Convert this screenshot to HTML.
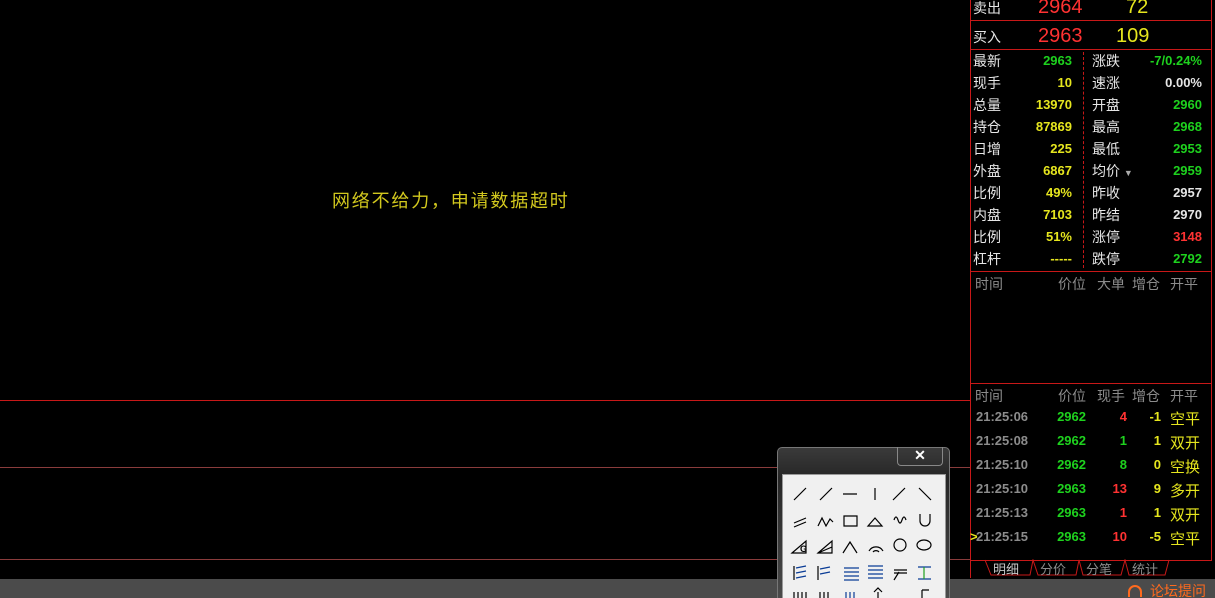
<!DOCTYPE html>
<html style="overflow:hidden;width:1215px;height:598px"><head><meta charset="utf-8"><style>
*{margin:0;padding:0;box-sizing:border-box}
body{width:1215px;height:598px;background:#000;position:relative;overflow:hidden;font-family:"Liberation Sans","Noto Sans CJK SC",sans-serif;}
.a{position:absolute;white-space:nowrap}
.hl{position:absolute;height:1px;background:#c81818}
.w{color:#e6e6e6;font-size:14px}
.n{font-size:13px;font-weight:bold;text-align:right}
.g{color:#1ed21e}.y{color:#e6e61e}.r{color:#ff3232}.wh{color:#e6e6e6}.gr{color:#8c8c8c}
.t{font-size:13px;font-weight:bold}
</style></head><body>
<div class="a" style="left:332px;top:187px;color:#d2c81e;font-size:18px;letter-spacing:1.8px">网络不给力，申请数据超时</div>
<div class="hl" style="left:0;top:400px;width:970px"></div>
<div class="hl" style="left:0;top:467px;width:970px;background:#8a3c3c"></div>
<div class="hl" style="left:0;top:559px;width:970px;background:#8a3c3c"></div>
<div class="a" style="left:0;top:579px;width:1215px;height:19px;background:#4b4b4b"></div>
<div class="a" style="left:970px;top:0;width:1px;height:578px;background:#c81818"></div>
<div class="a" style="left:1211px;top:0;width:1px;height:560px;background:#c81818"></div>
<div class="hl" style="left:970px;top:20px;width:242px"></div>
<div class="hl" style="left:970px;top:49px;width:242px"></div>
<div class="hl" style="left:970px;top:271px;width:242px"></div>
<div class="hl" style="left:970px;top:383px;width:242px"></div>
<div class="hl" style="left:970px;top:560px;width:242px"></div>
<div class="a" style="left:1083px;top:52px;height:216px;border-left:1px dashed #c81818"></div>
<div class="a w" style="left:973px;top:-2px">卖出</div>
<div class="a r" style="left:1038px;top:-4px;font-size:20px">2964</div>
<div class="a y" style="left:1126px;top:-4px;font-size:20px">72</div>
<div class="a w" style="left:973px;top:27px">买入</div>
<div class="a r" style="left:1038px;top:25px;font-size:20px">2963</div>
<div class="a y" style="left:1116px;top:25px;font-size:20px">109</div>
<div id="rows"></div>
<div class="a w gr" style="left:975px;top:274px">时间</div>
<div class="a w gr" style="left:1058px;top:274px">价位</div>
<div class="a w gr" style="left:1097px;top:274px">大单</div>
<div class="a w gr" style="left:1132px;top:274px">增仓</div>
<div class="a w gr" style="left:1170px;top:274px">开平</div>
<div class="a w gr" style="left:975px;top:386px">时间</div>
<div class="a w gr" style="left:1058px;top:386px">价位</div>
<div class="a w gr" style="left:1097px;top:386px">现手</div>
<div class="a w gr" style="left:1132px;top:386px">增仓</div>
<div class="a w gr" style="left:1170px;top:386px">开平</div>
<div id="ticks"></div>
<svg class="a" style="left:975px;top:559px" width="240" height="20"><path d="M10 1 L16 16 L55 16 L58 1 L63 16 L101 16 L104 1 L108 16 L146 16 L150 1 L154 16 L190 16 L194 1" fill="none" stroke="#c81818"/></svg>
<div class="a gr" style="left:993px;top:559px;font-size:13px;color:#c8c8c8">明细</div>
<div class="a gr" style="left:1040px;top:559px;font-size:13px">分价</div>
<div class="a gr" style="left:1086px;top:559px;font-size:13px">分笔</div>
<div class="a gr" style="left:1132px;top:559px;font-size:13px">统计</div>
<svg class="a" style="left:1126px;top:584px" width="18" height="14"><path d="M3 13 V8 A6 6 0 0 1 15 8 V13" fill="none" stroke="#ff6a1e" stroke-width="2"/></svg>
<div class="a" style="left:1150px;top:581px;color:#ff6a1e;font-size:14px">论坛提问</div>
<div class="a" style="left:777px;top:447px;width:173px;height:151px;border:1px solid #777;border-bottom:none;border-radius:5px 5px 0 0;background:linear-gradient(#3a3a3a,#262626 30px,#4a4a4a);overflow:hidden"></div>
<div class="a" style="left:897px;top:447px;width:46px;height:19px;border:1px solid #888;border-top:none;border-radius:0 0 4px 4px;color:#fff;font-weight:bold;font-size:14px;text-align:center;line-height:16px">✕</div>
<div class="a" style="left:782px;top:474px;width:164px;height:124px;background:#f0f0f0;border:1px solid #999;border-bottom:none"></div>
<svg class="a" style="left:782px;top:474px" width="164" height="124" fill="none" stroke="#000" stroke-width="1.2">
<path d="M12 26 L24 14 M38 26 L50 14 M61 20 L75 20 M93 14 V26 M111 26 L123 14 M137 14 L149 26"/>
<path d="M12 49 L24 44 M12 53 L24 48 M36 52 L40 44 L44 52 L48 45 L51 48 M62 42 H75 V52 H62 Z M86 52 L93 44 L100 52 Z M112 46 Q114 40 116 46 Q118 52 120 46 Q122 40 124 46 M138 40 V47 A5 5 0 0 0 148 47 V40"/>
<path d="M10 79 L24 67 V79 Z M36 79 L50 67 V79 Z M36 79 L50 73 M61 79 L68 68 L75 79 M87 77 A8 8 0 0 1 101 77 M91 78 A4 4 0 0 1 97 78"/>
<circle cx="118" cy="71" r="6"/><ellipse cx="142" cy="71" rx="7" ry="5"/>
<path d="M12 92 V106 M36 92 V106" /><path stroke="#0a3c96" d="M14 94 L24 92 M14 99 L24 97 M14 104 L24 102 M38 95 L48 93 M38 100 L48 98 M62 94 H77 M62 98 H77 M62 102 H77 M62 106 H77 M86 92 H101 M86 96 H101 M86 100 H101 M86 104 H101 M136 93 H149 M136 105 H149"/>
<path stroke="#1ea01e" d="M142 93 V105"/>
<path d="M112 96 H125 M112 99 H125 M112 106 L117 98"/>
<path d="M12 118 V124 M16 118 V124 M20 118 V124 M24 118 V124 M38 118 V124 M42 118 V124 M46 118 V124 M92 118 L96 114 L100 118 M96 118 V124 M140 116 H147 M140 116 V124"/>
<path stroke="#0a3c96" d="M64 118 V124 M68 118 V124 M72 118 V124"/>
</svg>
<svg class="a" style="left:793px;top:541px" width="20" height="12"><text x="7" y="11" font-size="9" font-weight="bold" font-family="Liberation Sans">G</text></svg>
<script>
var L=[["最新","2963","g","涨跌","-7/0.24%","g"],["现手","10","y","速涨","0.00%","wh"],["总量","13970","y","开盘","2960","g"],["持仓","87869","y","最高","2968","g"],["日增","225","y","最低","2953","g"],["外盘","6867","y","均价","2959","g"],["比例","49%","y","昨收","2957","wh"],["内盘","7103","y","昨结","2970","wh"],["比例","51%","y","涨停","3148","r"],["杠杆","-----","y","跌停","2792","g"]];
var h="";L.forEach(function(r,i){var t=51+i*22;h+='<div class="a w" style="left:973px;top:'+t+'px">'+r[0]+'</div><div class="a n '+r[2]+'" style="right:143px;top:'+(t+2)+'px">'+r[1]+'</div><div class="a w" style="left:1092px;top:'+t+'px">'+r[3]+(i==5?' <span style="font-size:9px;color:#aaa">▼</span>':'')+'</div><div class="a n '+r[5]+'" style="right:13px;top:'+(t+2)+'px">'+r[4]+'</div>';});
document.getElementById("rows").innerHTML=h;
var T=[["21:25:06","2962","4","r","-1","空平"],["21:25:08","2962","1","g","1","双开"],["21:25:10","2962","8","g","0","空换"],["21:25:10","2963","13","r","9","多开"],["21:25:13","2963","1","r","1","双开"],["21:25:15","2963","10","r","-5","空平"]];
h="";T.forEach(function(r,i){var t=409+i*24;h+='<div class="a t gr" style="left:976px;top:'+t+'px">'+r[0]+'</div><div class="a t g" style="right:129px;top:'+t+'px">'+r[1]+'</div><div class="a t '+r[3]+'" style="right:88px;top:'+t+'px">'+r[2]+'</div><div class="a t y" style="right:54px;top:'+t+'px">'+r[4]+'</div><div class="a y" style="left:1170px;top:'+(t-1)+'px;font-size:15px">'+r[5]+'</div>';});
h+='<div class="a t y" style="left:970px;top:529px">&gt;</div>';
document.getElementById("ticks").innerHTML=h;
</script>
</body></html>
